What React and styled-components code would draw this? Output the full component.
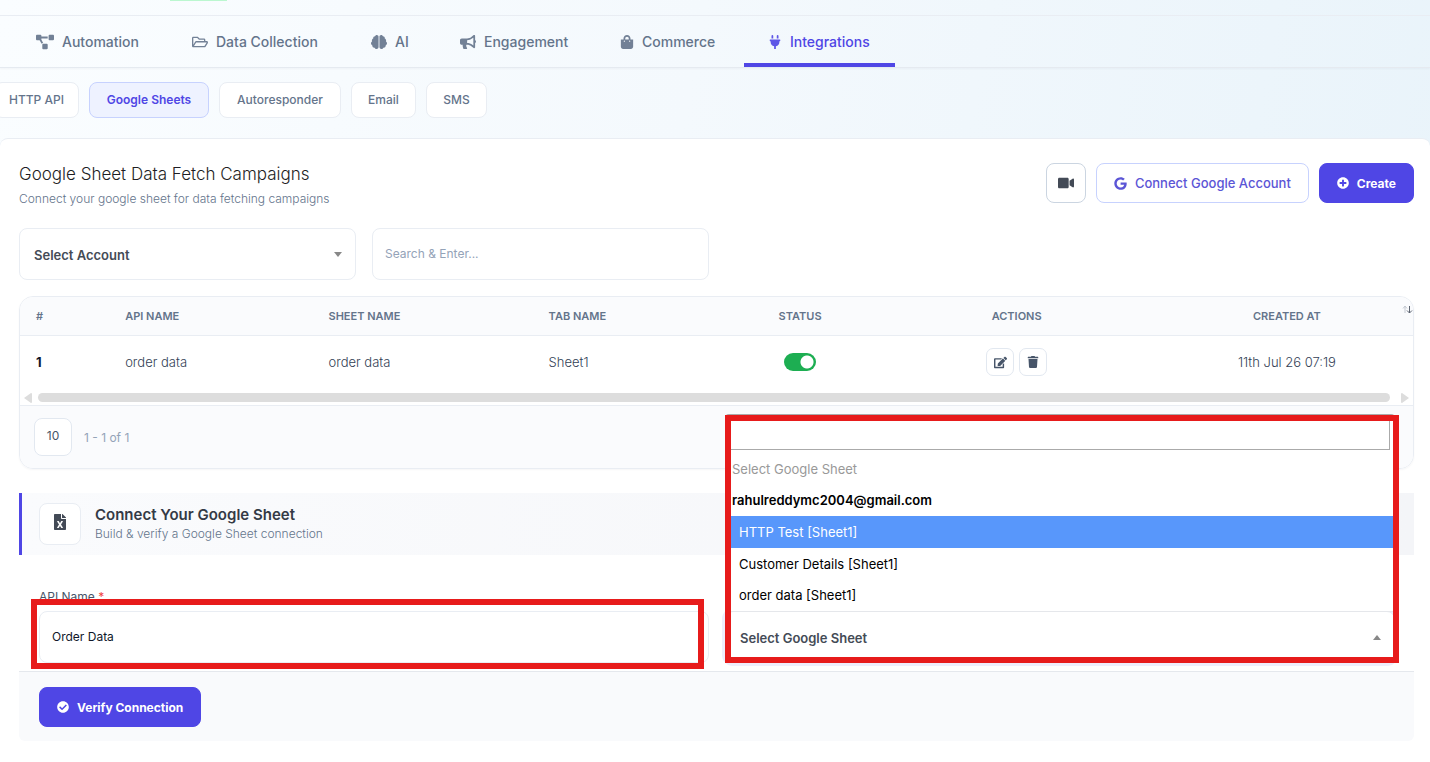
import React, { useState } from 'react';
import styled, { ThemeProvider, createGlobalStyle } from 'styled-components';
import { FaBrain, FaBullhorn, FaCheckCircle, FaEdit, FaFileExcel, FaGoogle, FaPlug, FaPlusCircle, FaProjectDiagram, FaRegFolderOpen, FaShoppingBag, FaTrash, FaVideo } from 'react-icons/fa';

const theme = {
  colors: {
    primary: '#4f46e5',
    primaryLight: '#eef2ff',
    primaryBorder: '#c7d2fe',
    border: '#e9edf3',
    soft: '#fafbfd',
    text: '#334155',
    muted: '#64748b',
    highlight: '#e71b1b',
  },
}

const GlobalStyle = createGlobalStyle`
  * {
    box-sizing: border-box;
  }

  body {
    margin: 0;
    color: #334155;
    background: #ffffff;
    font-family: Inter, "Liberation Sans", sans-serif;
    font-size: 13px;
  }

  button, input, select {
    font-family: inherit;
  }

  h1, h2, p, ul {
    margin: 0;
    padding: 0;
  }
`

const Page = styled.div`
  background: linear-gradient(100deg, #fafdff 0%, #f4f9fd 45%, #e8f3fa 100%);
`

const TopStrip = styled.div`
  height: 16px;
  padding-left: 170px;
  border-bottom: 1px solid ${({theme}) => theme.colors.border};

  span{
    display: block;
    width: 57px;
    height: 1px;
    background-color: #bbf7d0;
  }
`

const Tabs = styled.nav`
  display: flex;
  height: 52px;
  padding-left: 12px;
  border-bottom: 1px solid #e5eaf0;
  box-shadow: 0 1px 2px rgba(15, 23, 42, .04);
`

const Tab = styled.a`
  display: flex;
  align-items: center;
  gap: 8px;
  width: ${({$width}) => $width}px;
  padding: 4px 24px 0;
  border-bottom: 4px solid ${({$active, theme}) => $active ? theme.colors.primary : 'transparent'};
  color: ${({$active, theme}) => $active ? theme.colors.primary : theme.colors.muted};
  font-size: 14px;
  font-weight: 500;
  text-decoration: none;
  white-space: nowrap;

  svg{
    flex: none;
    opacity: .9;
  }
`

const Pills = styled.nav`
  display: flex;
  gap: 10px;
  padding: 14px 0 20px;
  margin-left: -6px;
`

const Pill = styled.a`
  display: flex;
  align-items: center;
  justify-content: center;
  min-width: ${({$width}) => $width}px;
  height: 36px;
  padding-bottom: 2px;
  border: 1px solid ${({$active, theme}) => $active ? theme.colors.primaryBorder : theme.colors.border};
  border-radius: 8px;
  background-color: ${({$active, theme}) => $active ? theme.colors.primaryLight : '#ffffff'};
  color: ${({$active, theme}) => $active ? theme.colors.primary : theme.colors.muted};
  font-size: 12px;
  font-weight: ${({$active}) => $active ? 600 : 500};
  text-decoration: none;
`

const Card = styled.main`
  padding: 24px 16px 21px 19px;
  border-top: 1px solid ${({theme}) => theme.colors.border};
  border-radius: 8px 8px 0 0;
  background-color: #ffffff;
`

const Header = styled.header`
  display: flex;
  justify-content: space-between;
  align-items: flex-start;

  h1{
    color: #1e1e24;
    font-size: 17px;
    font-weight: 300;
    line-height: 22px;
  }

  p{
    margin-top: 4px;
    color: ${({theme}) => theme.colors.muted};
    font-size: 12px;
    font-weight: 300;
    line-height: 20px;
  }
`

const HeaderActions = styled.div`
  display: flex;
  gap: 10px;
`

const Button = styled.button`
  display: inline-flex;
  align-items: center;
  justify-content: center;
  gap: 8px;
  height: 40px;
  padding: 0 17px;
  border: 1px solid ${({$primary, theme}) => $primary ? theme.colors.primary : theme.colors.primaryBorder};
  border-radius: 8px;
  background-color: ${({$primary, theme}) => $primary ? theme.colors.primary : '#ffffff'};
  color: ${({$primary}) => $primary ? '#ffffff' : '#5b55d6'};
  font-size: ${({$primary}) => $primary ? 12 : 13}px;
  font-weight: ${({$primary}) => $primary ? 700 : 500};
  cursor: pointer;
`

const IconButton = styled(Button)`
  width: 40px;
  padding: 0;
  border-color: #cbd5e1;
  color: #434a56;
`

const Filters = styled.div`
  display: grid;
  grid-template-columns: repeat(2, minmax(0, 337px));
  gap: 16px;
  margin-top: 19px;
`

const SelectBox = styled.div`
  display: flex;
  align-items: center;
  position: relative;

  svg{
    position: absolute;
    right: 13px;
    pointer-events: none;
  }
`

const Select = styled.select`
  width: 100%;
  height: 52px;
  padding: 2px 14px 0;
  border: 1px solid ${({theme}) => theme.colors.border};
  border-radius: 8px;
  outline: none;
  appearance: none;
  background-color: #ffffff;
  color: #444b56;
  font-size: 13px;
  font-weight: 600;
  box-shadow: ${({$open}) => $open ? '0 0 0 3px #eeeefc' : 'none'};
`

const Input = styled.input`
  width: 100%;
  height: 52px;
  padding: 0 12px 2px;
  border: 1px solid ${({theme}) => theme.colors.border};
  border-radius: 8px;
  outline: none;
  background-color: #ffffff;
  color: #0f172a;
  font-size: 12px;

  &::placeholder{
    color: #94a3b8;
  }
`

const TablePanel = styled.section`
  position: relative;
  margin-top: 16px;
  border: 1px solid ${({theme}) => theme.colors.border};
  border-radius: 14px;
  overflow: hidden;
  box-shadow: 0 1px 2px rgba(15, 23, 42, .04);
`

const SortMark = styled.svg`
  position: absolute;
  top: 8px;
  right: 0;
`

const Table = styled.table`
  width: 100%;
  border-collapse: separate;
  border-spacing: 0;
  table-layout: fixed;

  th{
    height: 39px;
    padding: 0 16px;
    border-bottom: 1px solid ${({theme}) => theme.colors.border};
    background-color: ${({theme}) => theme.colors.soft};
    color: ${({theme}) => theme.colors.muted};
    font-size: 11px;
    font-weight: 600;
    text-transform: uppercase;
  }

  td{
    height: 54px;
    padding: 0 16px 2px;
    font-size: 13px;
    font-weight: 300;
  }

  td:first-child{
    color: #0f172a;
    font-weight: 700;
  }
`

const Th = styled.th`
  width: ${({$width}) => $width};
  text-align: ${({$center}) => $center ? 'center' : 'left'};
`

const Td = styled.td`
  text-align: ${({$center}) => $center ? 'center' : 'left'};
`

const Toggle = styled.input`
  display: inline-block;
  width: 32px;
  height: 18px;
  margin: 0;
  border-radius: 9px;
  appearance: none;
  vertical-align: middle;
  background: radial-gradient(circle at 9px 9px, #ffffff 5px, transparent 6px) #cbd5e1;

  &:checked{
    background: radial-gradient(circle at 23px 9px, #ffffff 6px, #1dae52 7px);
  }
`

const RowActions = styled.div`
  display: flex;
  justify-content: center;
  gap: 5px;

  button{
    display: grid;
    place-items: center;
    width: 28px;
    height: 28px;
    padding: 0;
    border: 1px solid #e2e8f0;
    border-radius: 7px;
    background-color: #ffffff;
    color: #475569;
  }
`

const ScrollBar = styled.div`
  display: flex;
  align-items: center;
  gap: 6px;
  height: 15px;
  padding: 0 4px;

  div{
    flex: 1;
    height: 9px;
    border-radius: 5px;
    background-color: #dddddd;
  }

  div + svg{
    margin-left: 5px;
  }
`

const TableFooter = styled.div`
  display: flex;
  align-items: center;
  gap: 12px;
  height: 63px;
  padding-inline: 14px;
  border-top: 1px solid ${({theme}) => theme.colors.border};
  background-color: ${({theme}) => theme.colors.soft};
  color: #94a3b8;
  font-size: 12px;
`

const PageSize = styled.select`
  width: 38px;
  height: 38px;
  padding: 0 0 4px;
  border: 1px solid #e2e8f0;
  border-radius: 8px;
  appearance: none;
  background-color: #ffffff;
  color: #475569;
  font-size: 12px;
  text-align: center;
  text-align-last: center;
`

const FormHeader = styled.div`
  display: flex;
  align-items: center;
  gap: 14px;
  height: 62px;
  margin-top: 24px;
  padding-left: 17px;
  border-left: 3px solid ${({theme}) => theme.colors.primary};
  background: linear-gradient(90deg, #fafbfd, #f4f5f8);

  h2{
    color: #343a46;
    font-size: 15px;
    font-weight: 600;
    line-height: 20px;
  }

  p{
    color: ${({theme}) => theme.colors.muted};
    font-size: 12px;
    font-weight: 300;
    line-height: 18px;
  }
`

const FormIcon = styled.span`
  display: grid;
  place-items: center;
  width: 42px;
  height: 42px;
  padding-bottom: 4px;
  border: 1px solid ${({theme}) => theme.colors.border};
  border-radius: 8px;
  background-color: #ffffff;
  color: #434a56;
`

const FormBody = styled.div`
  display: grid;
  grid-template-columns: 1fr 1fr;
  align-items: end;
  gap: 16px;
  padding: 32px 19px 8px 20px;

  label{
    display: block;
    margin-bottom: 4px;
    color: #475569;
    font-size: 12px;
    line-height: 20px;
  }

  label span{
    color: #ef4444;
  }
`

const Field = styled.div`
  position: relative;
`

const Highlight = styled.div`
  position: absolute;
  inset: ${({$inset}) => $inset};
  border: 6px solid ${({theme}) => theme.colors.highlight};
  pointer-events: none;
`

const Dropdown = styled.div`
  position: absolute;
  right: 0;
  bottom: 51px;
  left: 0;
  height: 198px;
  border: 1px solid #aaaaaa;
  border-bottom-color: #e5e7eb;
  border-radius: 4px 4px 0 0;
  background-color: #ffffff;

  input{
    display: block;
    width: calc(100% - 8px);
    height: 32px;
    margin: 3px 4px;
    border: 1px solid #aaaaaa;
    outline: none;
  }
`

const Options = styled.ul`
  display: grid;
  grid-template-rows: repeat(5, 1fr);
  height: 158px;
  list-style: none;
`

const Option = styled.li`
  display: flex;
  align-items: center;
  padding-left: ${({$nested}) => $nested ? 13 : 6}px;
  background-color: ${({$selected}) => $selected ? '#5897fb' : 'transparent'};
  color: ${({$selected, $disabled}) => $selected ? '#ffffff' : $disabled ? '#999999' : '#000000'};
  font-size: 13px;
  font-weight: ${({$group}) => $group ? 600 : 400};
`

const FormFooter = styled.footer`
  padding: 15px 20px 14px;
  border-top: 1px solid #e5e8ed;
  border-radius: 0 0 6px 6px;
  background-color: #f9fafc;
`

const tabs = [
  { name: 'Automation', icon: FaProjectDiagram, width: 156, size: 18 },
  { name: 'Data Collection', icon: FaRegFolderOpen, width: 179, size: 16 },
  { name: 'AI', icon: FaBrain, width: 89, size: 16 },
  { name: 'Engagement', icon: FaBullhorn, width: 160, size: 16 },
  { name: 'Commerce', icon: FaShoppingBag, width: 148, size: 14 },
  { name: 'Integrations', icon: FaPlug, width: 151, size: 14, active: true },
]

const pills = [
  { name: 'HTTP API', width: 85 },
  { name: 'Google Sheets', width: 120, active: true },
  { name: 'Autoresponder', width: 122 },
  { name: 'Email', width: 65 },
  { name: 'SMS', width: 61 },
]

const columns = [
  { name: '#', width: '6.4%' },
  { name: 'Api name', width: '14.6%' },
  { name: 'Sheet name', width: '15.8%' },
  { name: 'Tab name', width: '14%' },
  { name: 'Status', width: '10.4%', center: true },
  { name: 'Actions', width: '20.7%', center: true },
  { name: 'Created at', width: '18.1%', center: true },
]

const campaigns = [
  { id: 1, api: 'order data', sheet: 'order data', tab: 'Sheet1', createdAt: '11th Jul 26 07:19' },
]

const sheets = [
  { name: 'Select Google Sheet', disabled: true },
  { name: 'rahulreddymc2004@gmail.com', group: true },
  { name: 'HTTP Test [Sheet1]', nested: true },
  { name: 'Customer Details [Sheet1]', nested: true },
  { name: 'order data [Sheet1]', nested: true },
]

function Caret({ up }){
  return(
    <svg width="10" height="5" viewBox="0 0 10 5" fill="#888888">
      <path d={up ? 'M1 5L5 0L9 5Z' : 'M1 0H9L5 5Z'} />
    </svg>
  )
}

function ScrollArrow({ left }){
  return(
    <svg width="8" height="10" viewBox="0 0 8 10" fill="#dddddd">
      <path d={left ? 'M7 0Q8 0 8 1V9Q8 10 7 10L0 5Z' : 'M1 0Q0 0 0 1V9Q0 10 1 10L8 5Z'} />
    </svg>
  )
}

function CampaignTable(){
  return(
    <TablePanel>
      <Table>
        <thead>
          <tr>
            {columns.map(col => <Th key={col.name} $width={col.width} $center={col.center}>{col.name}</Th>)}
          </tr>
        </thead>
        <tbody>
          {campaigns.map(item => (
            <tr key={item.id}>
              <Td>{item.id}</Td>
              <Td>{item.api}</Td>
              <Td>{item.sheet}</Td>
              <Td>{item.tab}</Td>
              <Td $center><Toggle type="checkbox" role="switch" defaultChecked aria-label="Status" /></Td>
              <Td $center>
                <RowActions>
                  <button type="button" aria-label="Edit"><FaEdit size={13} /></button>
                  <button type="button" aria-label="Delete"><FaTrash size={12} /></button>
                </RowActions>
              </Td>
              <Td $center>{item.createdAt}</Td>
            </tr>
          ))}
        </tbody>
      </Table>
      <SortMark width="11" height="9" viewBox="0 0 11 9" fill="none">
        <path d="M3 8V1M1 3.5L3 1L5 3.5" stroke="#c3c8d1" />
        <path d="M7.5 1V8M5 5.5L7.5 8L10 5.5" stroke="#5b6270" />
      </SortMark>
      <ScrollBar>
        <ScrollArrow left />
        <div />
        <ScrollArrow />
      </ScrollBar>
      <TableFooter>
        <PageSize aria-label="Rows per page">
          <option>10</option>
        </PageSize>
        <span>1 - 1 of 1</span>
      </TableFooter>
    </TablePanel>
  )
}

function ConnectForm(){
  const [selected, setSelected] = useState('HTTP Test [Sheet1]')

  return(
    <section>
      <FormHeader>
        <FormIcon><FaFileExcel size={16} /></FormIcon>
        <div>
          <h2>Connect Your Google Sheet</h2>
          <p>Build &amp; verify a Google Sheet connection</p>
        </div>
      </FormHeader>
      <FormBody>
        <Field>
          <label htmlFor="apiName">API Name <span>*</span></label>
          <Input id="apiName" defaultValue="Order Data" />
          <Highlight $inset="12px 5px -6px -8px" />
        </Field>
        <Field>
          <SelectBox>
            <Select $open aria-label="Google Sheet">
              <option>Select Google Sheet</option>
            </Select>
            <Caret up />
          </SelectBox>
          <Dropdown>
            <input type="search" aria-label="Search sheets" />
            <Options role="listbox">
              {sheets.map(sheet => (
                <Option
                  key={sheet.name}
                  role="option"
                  $nested={sheet.nested}
                  $group={sheet.group}
                  $disabled={sheet.disabled}
                  $selected={sheet.name === selected}
                  onMouseEnter={() => sheet.nested && setSelected(sheet.name)}
                >
                  {sheet.name}
                </Option>
              ))}
            </Options>
          </Dropdown>
          <Highlight $inset="-196px -4px 0 0" />
        </Field>
      </FormBody>
      <FormFooter>
        <Button type="button" $primary><FaCheckCircle size={12} /> Verify Connection</Button>
      </FormFooter>
    </section>
  )
}

export default function App(){
  return(
    <ThemeProvider theme={theme}>
      <GlobalStyle />
      <Page>
        <TopStrip><span /></TopStrip>
        <Tabs>
          {tabs.map(({ name, icon: Icon, width, size, active }) => (
            <Tab key={name} href="#" $width={width} $active={active}>
              <Icon size={size} /> {name}
            </Tab>
          ))}
        </Tabs>
        <Pills>
          {pills.map(pill => (
            <Pill key={pill.name} href="#" $width={pill.width} $active={pill.active}>{pill.name}</Pill>
          ))}
        </Pills>
        <Card>
          <Header>
            <div>
              <h1>Google Sheet Data Fetch Campaigns</h1>
              <p>Connect your google sheet for data fetching campaigns</p>
            </div>
            <HeaderActions>
              <IconButton type="button" aria-label="Watch video"><FaVideo size={16} /></IconButton>
              <Button type="button"><FaGoogle size={13} /> Connect Google Account</Button>
              <Button type="button" $primary><FaPlusCircle size={12} /> Create</Button>
            </HeaderActions>
          </Header>
          <Filters>
            <SelectBox>
              <Select aria-label="Account">
                <option>Select Account</option>
              </Select>
              <Caret />
            </SelectBox>
            <Input aria-label="Search" placeholder="Search &amp; Enter..." />
          </Filters>
          <CampaignTable />
          <ConnectForm />
        </Card>
      </Page>
    </ThemeProvider>
  )
}
